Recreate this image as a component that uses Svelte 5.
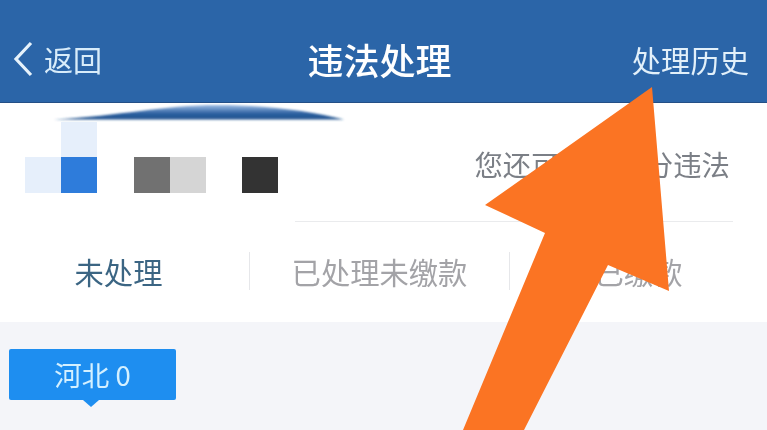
<script>
  const mosaic = ['', 'pale', 'pale', 'blue', '', ''];
  const tabs = ['未处理', '已处理未缴款', '已缴款'];
</script>

<div class="page">
  <header class="bar">
    <div class="back">
      <svg class="chev" width="22" height="36" viewBox="0 0 22 36"><path d="M19 2 L4 18 L19 34" /></svg>
      <span>返回</span>
    </div>
    <h1>违法处理</h1>
    <span class="hist">处理历史</span>
  </header>

  <section class="panel">
    <svg class="swoop" width="320" height="24" viewBox="0 0 320 24">
      <defs>
        <filter id="sb" x="-5%" y="-40%" width="110%" height="180%"><feGaussianBlur stdDeviation="1.2" /></filter>
        <linearGradient id="sg" x1="0" y1="0" x2="0" y2="1">
          <stop offset="0" stop-color="#9dbde6" />
          <stop offset="0.6" stop-color="#2a5f9f" />
          <stop offset="1" stop-color="#24548f" />
        </linearGradient>
      </defs>
      <path d="M22 16.5 C90 13 130 2 185 2 C240 2 280 9 312 16.5 Z" fill="url(#sg)" filter="url(#sb)" />
    </svg>

    <div class="info">
      <div class="plate">
        <div class="mosaic">
          {#each mosaic as m}
            <i class={m}></i>
          {/each}
        </div>
        <div class="pair"><i class="mid"></i><i class="soft"></i></div>
        <i class="dark"></i>
      </div>
      <p class="note">您还可处理 3 分违法</p>
    </div>
    <div class="rule"></div>

    <nav class="tabs">
      {#each tabs as t, i}
        <span class="tab" class:on={i === 0}>{t}</span>
      {/each}
    </nav>
  </section>

  <section class="list">
    <div class="tag">河北 0</div>
  </section>

  <svg class="arrow" width="767" height="430" viewBox="0 0 767 430">
    <polygon points="652,87 669,291 608,265 524,430 463,430 545,233 485,205" fill="#fb7423" />
  </svg>
</div>

<style>
  :global(body) { margin: 0; }
  .page {
    position: relative;
    width: 767px;
    height: 430px;
    overflow: hidden;
    background: #f4f5f9;
    font-family: "Noto Sans CJK SC", "Noto Sans", sans-serif;
    filter: blur(0.45px);
  }
  .bar {
    height: 103px;
    box-sizing: border-box;
    padding: 16px 18px 0 12px;
    background: #2b65a8;
    border-bottom: 1px solid #244f86;
    display: grid;
    grid-template-columns: 1fr auto 1fr;
    align-items: center;
    color: #fff;
  }
  .back {
    display: flex;
    align-items: center;
    gap: 10px;
    font-size: 29px;
    color: #d8ecfa;
    font-weight: 400;
  }
  .chev { fill: none; stroke: #e6f2fb; stroke-width: 3.2; }
  h1 {
    margin: 0;
    font-size: 36px;
    font-weight: 500;
    line-height: 1;
    transform: translateX(-1px);
  }
  .hist {
    justify-self: end;
    font-size: 29.3px;
    color: #e2f0fa;
    font-weight: 400;
  }
  .panel {
    position: relative;
    height: 219px;
    background: #fff;
    overflow: hidden;
  }
  .swoop { position: absolute; left: 32px; top: 0; }
  .info {
    box-sizing: border-box;
    display: flex;
    justify-content: space-between;
    align-items: flex-end;
    height: 90px;
    padding: 18px 37px 0 25px;
  }
  .plate { display: flex; align-items: flex-end; gap: 36px; }
  .plate i { display: block; width: 36px; height: 36px; }
  .pair { margin-left: 1px; display: flex; }
  .mosaic { display: grid; grid-template-columns: 36px 36px; grid-template-rows: 35px 36px; }
  .mosaic i { height: auto; }
  .mosaic .pale { background: #e6effb; }
  .mosaic .blue { background: #2e7cdb; }
  .plate .mid { background: #717171; }
  .plate .soft { background: #d5d5d5; }
  .plate .dark { background: #333; }
  .note {
    margin: 0 0 7px;
    font-size: 28.4px;
    line-height: 44px;
    color: #7b7f86;
    font-weight: 400;
    white-space: nowrap;
  }
  .rule {
    height: 1px;
    margin: 28px 34px 0 295px;
    background: #eaebed;
  }
  .tabs {
    display: grid;
    grid-template-columns: 249px 260px 1fr;
    margin-top: 30px;
    height: 38px;
  }
  .tab {
    display: flex;
    align-items: center;
    justify-content: center;
    font-size: 29.3px;
    line-height: 38px;
    color: #a3a3a7;
    font-weight: 400;
    border-left: 1px solid #e6e7ea;
    white-space: nowrap;
  }
  .tab.on {
    color: #3b6583;
    border-left: 0;
    padding-right: 12px;
  }
  .list { padding: 27px 0 0 9px; }
  .tag {
    position: relative;
    width: 167px;
    height: 51px;
    background: #1e8ef0;
    border-radius: 2px;
    color: #d4f0ff;
    font-size: 27.5px;
    line-height: 50px;
    text-align: center;
  }
  .tag::after {
    content: "";
    position: absolute;
    left: 74px;
    top: 51px;
    border: 8px solid transparent;
    border-top: 7px solid #1e8ef0;
    border-bottom: 0;
  }
  .arrow { position: absolute; left: 0; top: 0; }
</style>
